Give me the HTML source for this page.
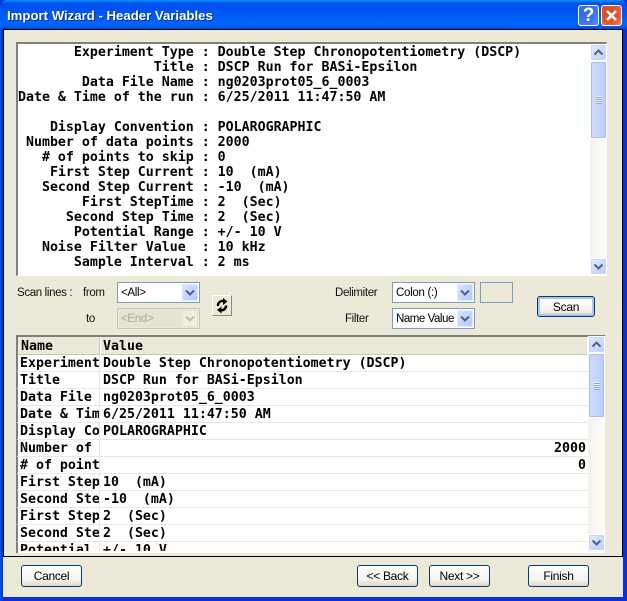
<!DOCTYPE html>
<html><head><meta charset="utf-8">
<style>
html,body{margin:0;padding:0;background:#ece9d8}
body{width:627px;height:601px;position:relative;overflow:hidden}
div,pre,span{position:absolute;box-sizing:border-box;margin:0}
.m{font:bold 13.28px/15px "DejaVu Sans Mono","Liberation Mono",monospace;color:#000;white-space:pre}
.l{font:11.5px/14px "Liberation Sans",sans-serif;color:#111;white-space:pre;letter-spacing:-.35px}
.btn{height:22px;border:1px solid #003c74;border-radius:3px;background:linear-gradient(#fff,#f4f3ee 70%,#dcd8c8);font:12px/21px "Liberation Sans",sans-serif;letter-spacing:-.3px;color:#000;text-align:center}
.combo{border:1px solid #7f9db9;background:#fff;width:83px;height:21px}
.combo .t{left:3px;top:3px;font:11.5px/14px "Liberation Sans",sans-serif;color:#000;white-space:pre;letter-spacing:-.3px}
.dd{right:1px;top:1px;width:16px;height:17px;background:linear-gradient(135deg,#d8e4fd,#b4c8f8);border-radius:1px;border:1px solid #dfe8fd}
.sb{background:linear-gradient(90deg,#f3f1ec,#fefefb);width:17px}
.sbtn{left:0;width:17px;height:17px;background:linear-gradient(135deg,#e3ebfe,#b9ccfa);border:1px solid #fff;border-radius:2px;box-shadow:inset 0 0 0 1px #c9d7fb}
.thumb{left:0;width:17px;background:linear-gradient(90deg,#d0dcfd,#bccdfb);border:1px solid #fff;border-radius:2px;box-shadow:inset 0 0 0 1px #a9bdf0}
.grip{left:5px;width:6px;height:1px;background:#eef3ff;box-shadow:0 1px #8ba3dd}
svg{position:absolute;left:0;top:0}
.row{left:0;width:571px;height:17px;border-bottom:1px solid #ece9d8}
.row .a{left:3px;top:0;width:79px;height:16px;overflow:hidden;font:bold 13.28px/17px "DejaVu Sans Mono","Liberation Mono",monospace;white-space:pre}
.row .b{left:86px;top:0;font:bold 13.28px/17px "DejaVu Sans Mono","Liberation Mono",monospace;white-space:pre}
.row .r{right:2px;top:0;font:bold 13.28px/17px "DejaVu Sans Mono","Liberation Mono",monospace;white-space:pre}
.row .s{left:82px;top:0;width:1px;height:17px;background:#ece9d8}
</style></head>
<body>
<!-- frame -->
<div style="left:0;top:0;width:627px;height:601px;background:#0831d9"></div>
<div style="left:0;top:0;width:627px;height:30px;border-radius:7px 7px 0 0;background:linear-gradient(#0997ff 0,#0053ee 3px,#0050ee 8px,#0066ff 24px,#0058ee 27px,#003dd7 30px)"></div>
<div style="left:0;top:30px;width:3px;height:571px;background:linear-gradient(90deg,#0055e5,#0831d9)"></div>
<div style="left:3px;top:29px;width:620px;height:568px;background:#ece9d8"></div>
<div style="left:3px;top:29px;width:620px;height:528px;border:1px solid #000"></div>
<div style="left:7px;top:7px;font:bold 13.2px/18px 'Liberation Sans',sans-serif;color:#000;opacity:.5;white-space:pre;margin:1px 0 0 1px">Import Wizard - Header Variables</div>
<div style="left:7px;top:7px;font:bold 13.2px/18px 'Liberation Sans',sans-serif;color:#fff;white-space:pre">Import Wizard - Header Variables</div>
<!-- help -->
<div style="left:578px;top:5px;width:21px;height:21px;border:1px solid #fff;border-radius:3px;background:radial-gradient(circle at 30% 30%,#2f69e8,#3d74ee 55%,#5d8df0)"></div>
<div style="left:578px;top:4px;width:21px;text-align:center;font:bold 19px/24px 'Liberation Sans',sans-serif;color:#fff">?</div>
<!-- close -->
<div style="left:601px;top:5px;width:21px;height:21px;border:1px solid #fff;border-radius:3px;background:radial-gradient(circle at 35% 35%,#d44a20,#dc5a36 60%,#e88a6c)"></div>
<svg style="left:601px;top:5px" width="21" height="21"><path d="M6 6L15 15M15 6L6 15" stroke="#fff" stroke-width="2.6" fill="none"/></svg>

<!-- top box -->
<div style="left:16px;top:42px;width:591px;height:234px;background:#fff;border-top:2px solid #808078;border-left:2px solid #808078;border-right:1px solid #fff;border-bottom:1px solid #fff"></div>
<pre class="m" style="left:18px;top:44.5px">       Experiment Type : Double Step Chronopotentiometry (DSCP)
                 Title : DSCP Run for BASi-Epsilon
        Data File Name : ng0203prot05_6_0003
Date &amp; Time of the run : 6/25/2011 11:47:50 AM

    Display Convention : POLAROGRAPHIC
 Number of data points : 2000
   # of points to skip : 0
    First Step Current : 10  (mA)
   Second Step Current : -10  (mA)
        First StepTime : 2  (Sec)
      Second Step Time : 2  (Sec)
       Potential Range : +/- 10 V
   Noise Filter Value  : 10 kHz
       Sample Interval : 2 ms</pre>

<!-- top scrollbar -->
<div class="sb" style="left:590px;top:44px;height:231px">
 <div class="sbtn" style="top:0"><svg width="15" height="15"><path d="M3.5 9.5L7.500 5.500L11.500 9.500" stroke="#4d6185" stroke-width="2" fill="none"/></svg></div>
 <div class="thumb" style="top:17px;height:78px"><div class="grip" style="top:34px"></div><div class="grip" style="top:36px"></div><div class="grip" style="top:38px"></div><div class="grip" style="top:40px"></div></div>
 <div class="sbtn" style="top:214px"><svg width="15" height="15"><path d="M3.500 5.500L7.500 9.500L11.500 5.500" stroke="#4d6185" stroke-width="2" fill="none"/></svg></div>
</div>

<!-- controls -->
<div class="l" style="left:17px;top:286px">Scan lines :</div>
<div class="l" style="left:83px;top:286px">from</div>
<div class="l" style="left:86px;top:312px">to</div>
<div class="combo" style="left:117px;top:282px"><div class="t">&lt;All&gt;</div><div class="dd"><svg width="14" height="15"><path d="M3 5.500L7 9.500L11 5.500" stroke="#4d6185" stroke-width="2" fill="none"/></svg></div></div>
<div class="combo" style="left:117px;top:308px;background:#ece9d8;border-color:#c9c7ba;height:21px"><div style="left:1px;top:1px;width:62px;height:17px;background:#e6e3d3"></div><div class="t" style="color:#aca899">&lt;End&gt;</div><div class="dd" style="background:#f0eee2;border-color:#e2dfd0"><svg width="14" height="15"><path d="M3 5.500L7 9.500L11 5.500" stroke="#c0beb2" stroke-width="2" fill="none"/></svg></div></div>
<div style="left:212px;top:295px;width:20px;height:21px;background:#ece9d8;border:1px solid;border-color:#fff #8c8a7f #8c8a7f #fff"></div>
<svg style="left:212px;top:295px" width="20" height="21"><path d="M6 11 A4.500 4.500 0 0 1 12.500 6.500" stroke="#000" stroke-width="2.4" fill="none"/><path d="M14 10.500 A4.500 4.500 0 0 1 8 15" stroke="#000" stroke-width="2.4" fill="none"/><path d="M11 3L15.500 6.500L11 10Z M9.500 11.500L5 15L9.500 18.500Z" fill="#000"/></svg>

<div class="l" style="left:335px;top:286px">Delimiter</div>
<div class="l" style="left:345px;top:312px">Filter</div>
<div class="combo" style="left:392px;top:282px"><div class="t">Colon (:)</div><div class="dd"><svg width="14" height="15"><path d="M3 5.500L7 9.500L11 5.500" stroke="#4d6185" stroke-width="2" fill="none"/></svg></div></div>
<div class="combo" style="left:392px;top:308px"><div class="t" style="letter-spacing:-.45px">Name Value</div><div class="dd"><svg width="14" height="15"><path d="M3 5.500L7 9.500L11 5.500" stroke="#4d6185" stroke-width="2" fill="none"/></svg></div></div>
<div style="left:480px;top:282px;width:33px;height:21px;border:1px solid #7f9db9;background:#ece9d8"></div>
<div class="btn" style="left:537px;top:296px;width:58px;height:21px;box-shadow:inset 0 0 0 2px #a9c4ee">Scan</div>

<!-- list -->
<div style="left:16px;top:335px;width:589px;height:218px;background:#fff;border-top:2px solid #808078;border-left:2px solid #808078"></div>
<div style="left:18px;top:337px;width:569px;height:18px;background:#ece9d8;border-bottom:1px solid #c9c6b4"></div>
<div style="left:99px;top:337px;width:1px;height:18px;background:#c9c6b4"></div>
<div style="left:100px;top:337px;width:1px;height:18px;background:#fff"></div>
<div class="m" style="left:21px;top:338.500px">Name</div>
<div class="m" style="left:103px;top:338.500px">Value</div>
<div style="left:17px;top:355px;width:571px;height:196px;overflow:hidden">
 <div class="row" style="top:0"><div class="a">Experiment Type</div><div class="s"></div><div class="b">Double Step Chronopotentiometry (DSCP)</div></div>
 <div class="row" style="top:17px"><div class="a">Title</div><div class="s"></div><div class="b">DSCP Run for BASi-Epsilon</div></div>
 <div class="row" style="top:34px"><div class="a">Data File Name</div><div class="s"></div><div class="b">ng0203prot05_6_0003</div></div>
 <div class="row" style="top:51px"><div class="a">Date &amp; Time of</div><div class="s"></div><div class="b">6/25/2011 11:47:50 AM</div></div>
 <div class="row" style="top:68px"><div class="a">Display Convention</div><div class="s"></div><div class="b">POLAROGRAPHIC</div></div>
 <div class="row" style="top:85px"><div class="a">Number of data</div><div class="s"></div><div class="r">2000</div></div>
 <div class="row" style="top:102px"><div class="a"># of points</div><div class="s"></div><div class="r">0</div></div>
 <div class="row" style="top:119px"><div class="a">First Step Current</div><div class="s"></div><div class="b">10  (mA)</div></div>
 <div class="row" style="top:136px"><div class="a">Second Step Current</div><div class="s"></div><div class="b">-10  (mA)</div></div>
 <div class="row" style="top:153px"><div class="a">First StepTime</div><div class="s"></div><div class="b">2  (Sec)</div></div>
 <div class="row" style="top:170px"><div class="a">Second Step Time</div><div class="s"></div><div class="b">2  (Sec)</div></div>
 <div class="row" style="top:187px"><div class="a">Potential Range</div><div class="s"></div><div class="b">+/- 10 V</div></div>
</div>

<!-- list scrollbar -->
<div class="sb" style="left:588px;top:336px;height:216px">
 <div class="sbtn" style="top:0"><svg width="15" height="15"><path d="M3.500 9.500L7.500 5.500L11.500 9.500" stroke="#4d6185" stroke-width="2" fill="none"/></svg></div>
 <div class="thumb" style="top:17px;height:65px"><div class="grip" style="top:28px"></div><div class="grip" style="top:30px"></div><div class="grip" style="top:32px"></div><div class="grip" style="top:34px"></div></div>
 <div class="sbtn" style="top:198px"><svg width="15" height="15"><path d="M3.500 5.500L7.500 9.500L11.500 5.500" stroke="#4d6185" stroke-width="2" fill="none"/></svg></div>
</div>

<!-- footer buttons -->
<div class="btn" style="left:21px;top:565px;width:61px">Cancel</div>
<div class="btn" style="left:357px;top:565px;width:61px">&lt;&lt; Back</div>
<div class="btn" style="left:429px;top:565px;width:61px">Next &gt;&gt;</div>
<div class="btn" style="left:528px;top:565px;width:61px">Finish</div>
</body></html>
